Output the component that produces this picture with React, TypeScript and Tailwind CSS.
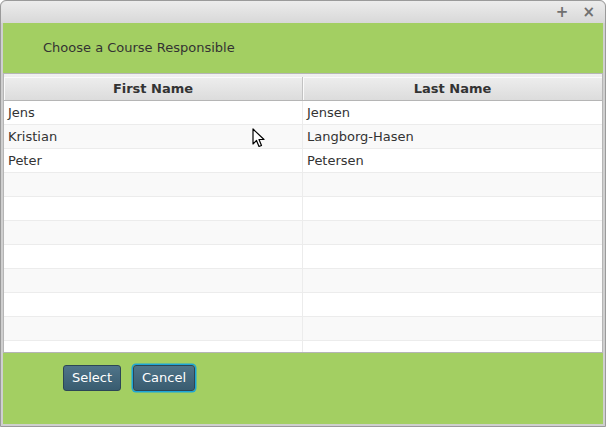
const rows = [
  ["Jens", "Jensen"],
  ["Kristian", "Langborg-Hasen"],
  ["Peter", "Petersen"],
  ["", ""],
  ["", ""],
  ["", ""],
  ["", ""],
  ["", ""],
  ["", ""],
  ["", ""],
  ["", ""],
];

export default function App() {
  return (
    <div className="w-[606px] h-[427px] bg-white font-['DejaVu_Sans',sans-serif] text-[13px] text-[#333]">
      <div className="relative flex h-full flex-col rounded-t-[6px] border border-[#9a9a9a] bg-[#cfcfcf] px-[2px] pb-[2px]">
        {/* title bar */}
        <div className="-mx-[2px] flex h-[22px] items-center justify-end gap-[14px] rounded-t-[6px] bg-gradient-to-b from-[#ececec] to-[#d8d8d8] pr-[10px] text-[#707070]">
          <span className="text-[15px] font-bold leading-none">+</span>
          <span className="text-[15px] font-bold leading-none">×</span>
        </div>

        {/* header */}
        <div className="flex h-[50px] items-center bg-[#a3cf62] pl-[40px] text-[13px] text-[#333]">
          Choose a Course Responsible
        </div>

        {/* table */}
        <div className="h-[280px] overflow-hidden border border-[#b5b5b5] bg-white">
          <div className="flex h-[27px] border-b border-[#b5b5b5] bg-gradient-to-b from-[#f0f0f0] to-[#dcdcdc] pt-[3px] font-bold">
            <div className="flex w-[299px] items-center justify-center border-r border-[#c2c2c2] shadow-[inset_1px_1px_0_#fafafa]">
              First Name
            </div>
            <div className="flex flex-1 items-center justify-center shadow-[inset_1px_1px_0_#fafafa]">
              Last Name
            </div>
          </div>
          {rows.map((r, i) => (
            <div
              key={i}
              className={`flex h-[24px] border-b border-[#ececec] ${i % 2 === 0 ? "bg-white" : "bg-[#f9f9f9]"}`}
            >
              <div className="flex w-[299px] items-center border-r border-[#ececec] pl-[4px]">{r[0]}</div>
              <div className="flex flex-1 items-center pl-[4px]">{r[1]}</div>
            </div>
          ))}
        </div>

        {/* footer */}
        <div className="flex flex-1 items-start gap-[12px] bg-[#a3cf62] pl-[60px] pt-[12px]">
          <button className="h-[26px] w-[58px] rounded-[3px] border border-[#2c4656] bg-gradient-to-b from-[#4f7489] to-[#395c70] text-[13px] text-white">
            Select
          </button>
          <button className="h-[26px] w-[62px] rounded-[3px] border border-[#2c4656] bg-gradient-to-b from-[#4f7489] to-[#395c70] text-[13px] text-white ring-[1.5px] ring-[#1da6d8]">
            Cancel
          </button>
        </div>

        {/* mouse pointer */}
        <svg className="absolute left-[251px] top-[127px]" width="14" height="21" viewBox="0 0 14 21">
          <path d="M1 1 L1 16 L4.5 12.5 L7 18.5 L9.5 17.5 L7 11.5 L12 11.5 Z" fill="#fff" stroke="#000" strokeWidth="1.2" strokeLinejoin="round" />
        </svg>
      </div>
    </div>
  );
}
